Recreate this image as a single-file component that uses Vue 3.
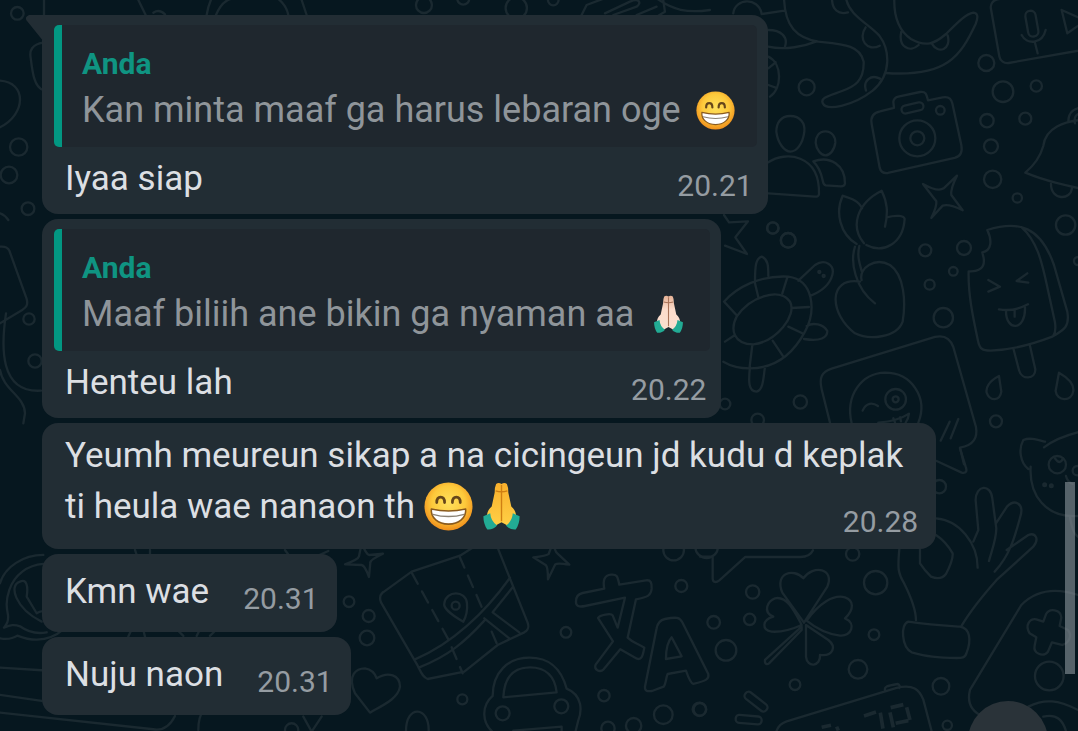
<script setup>
const messages = [
  {
    id: 1,
    quote: { author: 'Anda', text: 'Kan minta maaf ga harus lebaran oge', emoji: 'grin' },
    lines: [{ text: 'Iyaa siap', emoji: [] }],
    time: '20.21',
    tail: true,
  },
  {
    id: 2,
    quote: { author: 'Anda', text: 'Maaf biliih ane bikin ga nyaman aa', emoji: 'pray-light' },
    lines: [{ text: 'Henteu lah', emoji: [] }],
    time: '20.22',
  },
  {
    id: 3,
    lines: [
      { text: 'Yeumh meureun sikap a na cicingeun jd kudu d keplak', emoji: [] },
      { text: 'ti heula wae nanaon th', emoji: ['grin', 'pray'] },
    ],
    time: '20.28',
  },
  { id: 4, lines: [{ text: 'Kmn wae', emoji: [] }], time: '20.31' },
  { id: 5, lines: [{ text: 'Nuju naon', emoji: [] }], time: '20.31' },
]
</script>

<template>
  <main class="chat">
    <svg class="defs" aria-hidden="true">
      <defs>
        <radialGradient id="face" cx="50%" cy="42%" r="58%">
          <stop offset="0" stop-color="#ffe05c" />
          <stop offset="0.6" stop-color="#fdc93b" />
          <stop offset="1" stop-color="#f08f1c" />
        </radialGradient>
        <linearGradient id="skin" x1="0" y1="0" x2="0" y2="1">
          <stop offset="0" stop-color="#f9b02c" />
          <stop offset="1" stop-color="#ffd046" />
        </linearGradient>
        <linearGradient id="skin-light" x1="0" y1="0" x2="0" y2="1">
          <stop offset="0" stop-color="#e5b296" />
          <stop offset="0.4" stop-color="#fbdccb" />
          <stop offset="1" stop-color="#fbe0d0" />
        </linearGradient>
        <symbol id="grin" viewBox="0 0 50 50">
          <circle cx="25" cy="25" r="24.5" fill="url(#face)" />
          <path d="M13 21q0-5.500 4-5.500t4 5.500M29 21q0-5.500 4-5.500t4 5.500" fill="none" stroke="#66461a" stroke-width="2.800" stroke-linecap="round" />
          <path d="M7.500 27.500q17.500 4 35 0c.8 9-7 15.500-17.500 15.500S6.700 36.500 7.500 27.500z" fill="#fff" stroke="#8a5a1e" stroke-width="1.600" stroke-linejoin="round" />
          <path d="M9 33q16 4.500 32 0" fill="none" stroke="#8b8377" stroke-width="1.500" />
        </symbol>
        <symbol id="pray" viewBox="0 0 50 50">
          <path d="M19.500 2q2.500-2 5.500 0 3-2 5.500 0Q32 5 32 11l3 14q5 4 5 11l-8 9-7-4-7 4-8-9q0-7 5-11l3-14q0-6 1.500-9z" fill="url(#skin)" />
          <path d="M25 3v37M19 9q6 2 12 0" stroke="#cf7f13" stroke-width="1.400" fill="none" />
          <path d="M13.500 32L6.500 35q0 8 4 13.500 6 .5 10-4Q14 40 13.500 32z" fill="#22ab94" />
          <path d="M36.500 32l7 3q0 8-4 13.500-6 .5-10-4Q36 40 36.500 32z" fill="#22ab94" />
        </symbol>
        <symbol id="pray-light" viewBox="0 0 50 50">
          <path d="M19.500 2q2.500-2 5.500 0 3-2 5.500 0Q32 5 32 11l3 14q5 4 5 11l-8 9-7-4-7 4-8-9q0-7 5-11l3-14q0-6 1.500-9z" fill="url(#skin-light)" />
          <path d="M25 3v37M19 9q6 2 12 0" stroke="#a9745a" stroke-width="1.400" fill="none" />
          <path d="M13.500 32L6.500 35q0 8 4 13.500 6 .5 10-4Q14 40 13.500 32z" fill="#22ab94" />
          <path d="M36.500 32l7 3q0 8-4 13.500-6 .5-10-4Q36 40 36.500 32z" fill="#22ab94" />
        </symbol>
      </defs>
    </svg>

    <svg class="wallpaper" viewBox="0 0 1078 731" preserveAspectRatio="xMidYMid slice" aria-hidden="true">
      <!-- upper right: octopus, voice card, camera, people, bell, sparkle -->
      <g transform="translate(760 0) scale(.3333)">
        <path d="M72-5C75 80 110 115 175 125c75 8 125 10 136 60 2 60-30 75-65 88-40 15-65 20-58 36 10 25 90 10 150-37 60-50 50-125 20-165-35-38-90-60-100-112M5 42l68-10M25 140c50 12 110-2 145-16" />
        <path d="M216-5c0 35 20 50 48 42M317 82c-25 35 5 75 42 55M318 272c-10-30 15-50 42-36M25 90c38 0 60 20 50 50M25 170c42 20 42 95 5 120M25 205l22-18M25 255l22 8" />
        <path d="M403-5c-2 60 18 100 50 122 45 25 70 15 105-15 40-40 60-60 82-64 18 2 12 20 7 34-45 95-85 160-270 147M424 95c-10 45 25 65 52 40M515 130c20 35 60 18 48-24" />
        <rect x="722" y="-4" width="310" height="194" rx="24" transform="rotate(-10 740 190)" />
        <rect x="800" y="32" width="31" height="78" rx="15" transform="rotate(-10 816 70)" />
        <path d="M785 105c15 30 62 28 72-15M825 128l8 32M905 30l72 32-55 38z" />
        <path d="M335 372c-4-22 5-34 25-38l42-10-2-18c1-9 6-14 15-16l65-14c18-3 20 8 24 25l44-9c16-3 26 4 29 18l27 125c4 22-4 35-20 39l-200 45c-14 2-22-4-25-16z" />
        <circle cx="472" cy="415" r="54" /><circle cx="472" cy="415" r="21" /><circle cx="541" cy="331" r="13" />
        <rect x="424" y="312" width="67" height="24" rx="12" transform="rotate(-13 457 324)" />
        <path d="M91 348c30 0 45 22 42 47-5 40-25 60-42 60s-38-25-42-60c0-25 12-47 42-47zM196 394c20 0 31 17 30 34-3 25-18 38-30 38s-27-15-29-38c0-17 9-34 29-34zM25 487c50-35 155-25 152 95-1 8-5 8-12 8L25 580M160 484c50-17 96 10 95 67-1 7-5 8-12 8l-46-3c-6-2-8-8-9-15-5-26-13-42-28-57z" />
        <path d="M489 552q45 25 62 13l40-38q-20 40-17 58l34 46q-40-20-60-14l-34 37q17-35 15-50z" />
        <path d="M1000 358c-95 0-145 30-150 80-10 35-30 60-54 80 60 25 120 38 204 56M873 552c0 50 60 50 63 12M925 365c0-30 20-42 45-42M945 370c-5-20 5-30 25-32" />
        <circle cx="140" cy="262" r="24" /><circle cx="679" cy="189" r="24" /><circle cx="729" cy="275" r="31" /><circle cx="829" cy="258" r="17" /><circle cx="681" cy="362" r="20" /><circle cx="796" cy="356" r="18" /><circle cx="693" cy="439" r="21" /><circle cx="698" cy="538" r="26" /><circle cx="772" cy="594" r="14" /><circle cx="917" cy="675" r="29" /><circle cx="39" cy="684" r="17" /><circle cx="84" cy="721" r="22" />
      </g>
      <!-- middle right: sprout, turtle, ice cream, sticker, cat -->
      <g transform="translate(700 200) scale(.3333)">
        <path d="M470 132c-50-30-65-95-42-145 25 8 48 15 58 38M492 130C450 80 470 10 545-28c17 35 20 65 10 108M560 52c30-8 52-5 54 5-5 75-65 105-115 78M465 140c-15 45 0 125 60 170M478 138c-7 30 0 50 7 75M480 245c-100-15-90 100-15 155 40 20 125 15 143-35 10-60 5-140-38-170-45-25-95 10-85 45" />
        <path d="M72 305C110 262 180 225 265 230c75 10 85 100 50 165-40 75-95 110-165 110-35 0-60-8-80-20M110 350c40-60 130-90 160-45 22 40-40 120-110 128-60 0-70-45-50-83zM165 250l10 42M262 232l-15 48M295 242l50-47c30-20 60 0 52 30-8 30-35 50-65 62M320 378c20-12 50-5 62 15 0 20-20 32-70 24M165 245c0-50 3-70 20-75 20 8 20 30 20 58M150 500c-5 45-5 75 20 75 20-5 20-40 25-75M75 308l35 38M275 324l52-3M265 380l42 20M218 422l30 45M157 435l-8 65M75 425l30-20" />
        <circle cx="358" cy="216" r="3" /><circle cx="371" cy="228" r="3" />
        <path d="M862 90c95-30 160-10 200 105l40 140c8 45-10 55-45 75-65 25-120 40-185 42-25 0-33-5-38-30-15-70-30-140-28-208 30 2 50-10 45-40l-4-17c28-5 30-35 15-67zM965 82c45 40 60 100 75 170l25 115c3 20 0 33-5 40M865 240l35 20-35 15M982 220l-32 23 35 5M897 328q45 8 87-15M918 332c0 65 60 60 57-10M944 328v22M940 445l17 65c8 32 50 28 49-2l-17-75" />
        <path d="M390 668l-25-100c-8-35 0-52 30-62l310-95c25-6 45 3 55 30l68 240c5 30-5 55-48 62l12 50M455 670c-20-85 30-150 100-152 80 0 130 75 100 150M488 632c10-25 30-25 46-14M535 668q60-5 92-27-2 17-10 27M580 655l5 12M600 652l3 12M722 722l27-57M752 715l23-58" />
        <circle cx="587" cy="598" r="31" /><circle cx="587" cy="598" r="9" />
        <path d="M897 528c-30 15-40 35-37 50 10 28 40 25 44-3zM1077 518c35 20 45 40 43 55-5 35-50 30-53 0z" />
        <circle cx="218" cy="84" r="17" /><circle cx="265" cy="121" r="22" /><circle cx="676" cy="151" r="18" /><circle cx="792" cy="144" r="21" /><circle cx="760" cy="214" r="13" /><circle cx="689" cy="254" r="15" /><circle cx="730" cy="353" r="29" /><circle cx="1134" cy="183" r="12" /><circle cx="301" cy="606" r="20" /><circle cx="173" cy="660" r="19" /><circle cx="75" cy="612" r="16" /><circle cx="888" cy="664" r="18" />
        <path d="M72 45l15 22 57-3-38 48 35 50-66-25" />
      </g>
      <g transform="translate(900 390) scale(.3333)">
        <path d="M110 213l75 35c14 3 17-5 12-18l-17-55M385 237c-25-20-30-60-15-87 18-8 38-2 65 5M432 172q40-30 110-47M392 230c-5 85 45 155 143 148M498 258q4 18 20 24M465 205q15 22 24 0" />
        <circle cx="472" cy="224" r="26" /><circle cx="532" cy="242" r="14" /><circle cx="434" cy="284" r="4" /><circle cx="454" cy="287" r="4" /><circle cx="118" cy="290" r="20" />
      </g>
      <!-- lower right: clover, hand, gamepad, clock, speech bubble -->
      <g transform="translate(700 460) scale(.3333)">
        <path d="M0 290h38v65c0 13 10 14 20 6l78-70h165c20 0 32-7 38-20" />
        <path d="M312 488l-65-90c-25-60 35-75 63-43 30-42 95-30 72 25zM305 495c-22 10-60 22-90 20-30-5-30-35 5-45-35-15-15-48 5-55 37-8 60 42 80 80zM320 482c35-50 80-80 115-70 25 8 30 35 0 63 35 15 20 55-15 52-40-5-70-20-100-45zM318 495v95c3 35 45 30 42-5 40 5 50-25 25-45zM305 500L195 600c-2 12 6 15 12 10l98-100z" />
        <path d="M708 175c70 5 125 75 125 148M708 225q30 20 50 55 2 20-20 62-15 20-45 8-20-20-33-40v-45M598 268c-5 55-5 70 15 103 25 50 35 80 35 110M820 245l15-35-8-90c0-45 45-50 50-5l12 90c0 35-15 70-22 98M888 190l33-50c25-25 52-8 40 30-15 55-30 115-77 165M920 270l65-45c20-8 35 10 15 35L890 360c-40 45-80 95-105 137" />
        <path d="M625 485c70 10 110 12 155 15 30 5 35 40 20 78-4 16-15 16-30 16-60 0-90-5-135-17-30-15-35-85-10-92z" />
        <path d="M1134 405c-75-25-130-10-170 30L810 690c-10 40 5 65 40 80M985 740c50-25 90-20 149 10M1030 770c40-10 60 10 70 50M1110 170c5 35 15 55 24 60" />
        <path d="M1030 485l8-22c10-20 45-15 46 10l-5 25 25 12c15 20 0 42-18 45l-30-8-12 28c-15 18-45 5-40-18l5-25-20-12c-15-25 0-45 20-42z" />
        <circle cx="1048" cy="648" r="43" />
        <path d="M230 812c5-15 12-22 30-28l330-100c50-12 68 5 80 35l25 95M555 690c-2-10 3-12 38-18 6 2 7 8 5 12" />
        <path d="M492 768l36-12M541 758l8 48M572 743l38-9M570 757l10 45M620 742l10 38M587 790l38-8M365 802l28-6M410 800l5 12" stroke-width="11" stroke-linecap="butt" />
        <rect x="128" y="713" width="80" height="24" rx="11" transform="rotate(38 168 725)" /><rect x="107" y="767" width="78" height="24" rx="11" transform="rotate(5 146 779)" />
        <circle cx="158" cy="396" r="20" /><circle cx="41" cy="487" r="19" /><circle cx="149" cy="478" r="17" /><circle cx="78" cy="571" r="31" /><circle cx="527" cy="368" r="35" /><circle cx="522" cy="524" r="16" /><circle cx="474" cy="628" r="28" /><circle cx="285" cy="674" r="16" /><circle cx="723" cy="679" r="25" /><circle cx="742" cy="796" r="14" /><circle cx="458" cy="282" r="20" /><circle cx="-2" cy="748" r="20" />
      </g>
      <!-- lower middle: map, language symbols, car, heart, sparkles -->
      <g transform="translate(330 540) scale(.3333)">
        <path d="M45 73q40-14 42-24l8-40q12 32 22 36l42-4q-38 18-38 27l-4 43q-12-34-22-36zM610 52q40-4 46-10l14-38q4 30 12 36l36 34q-36-6-42-1l-22 45q0-36-6-42z" />
        <path d="M155 160l90-65 145-48 40-25M505 28l88 220c5 15 2 22-10 29l-80 38-100 80-110 22c-15-5-20-20-30-40l-110-190c-5-12-5-20 5-30M255 358c110-45 210-140 285-245M268 382c90-35 140-80 195-140M548 142l-60 75 80 60M463 235l75 60" />
        <path d="M245 98l110 200M388 48l68 155M365 322l33 78M485 275l18 42" stroke-dasharray="38 26" />
        <path d="M400 245c-45-25-60-45-57-55 5-40 65-40 68 0 2 20-3 40-11 55z" /><circle cx="377" cy="197" r="12" />
        <path d="M120 518L75 460c-25-55 5-75 30-75 20 3 30 15 35 30 35-22 70-10 70 25-5 35-50 55-90 78z" />
        <path d="M738 185c0-15 5-23 20-26l65-13c-5-25 0-40 20-42 18-2 20 5 25 30l80-13c15-2 18 8 17 25-2 20-10 25-47 32l-25 115c15 15 30 17 50 30-5 30-10 37-22 33l-50-28-50 60c-12 12-30 0-24-14l52-70-45-70c5-10 40-15 44-8l15 37 22-90-120 25c-18 4-28 0-27-13z" />
        <path d="M945 440l35-175c3-17 12-25 25-28 35-7 45-5 52 10l78 155c3 15-5 20-45 30-8-2-15-20-22-40l-55 10c-5 10-5 30-12 38l-35 13c-15 2-22 0-21-13zM1025 292l30 57-47 8c0-30 3-50 17-65z" />
        <path d="M488 468c0-70 45-115 110-115 60 0 95 30 112 93 50 20 45 70 35 95l-8 32M488 468c-35 30-32 80 0 108M520 472c3-60 30-90 80-90s75 30 80 75zM550 572l145-12v15M228 573c0-80 70-75 68 0" />
        <circle cx="518" cy="520" r="21" /><circle cx="694" cy="499" r="21" />
        <circle cx="57" cy="185" r="16" /><circle cx="116" cy="228" r="18" /><circle cx="111" cy="294" r="22" /><circle cx="397" cy="478" r="15" /><circle cx="708" cy="277" r="16" /><circle cx="822" cy="467" r="17" /><circle cx="1054" cy="138" r="18" /><circle cx="1000" cy="524" r="28" /><circle cx="1110" cy="508" r="19" /><circle cx="834" cy="565" r="20" /><circle cx="911" cy="557" r="23" /><circle cx="1031" cy="30" r="31" /><circle cx="1130" cy="20" r="34" />
      </g>
      <!-- left edge and top strip -->
      <g transform="scale(.3333)">
        <circle cx="52" cy="40" r="19" /><circle cx="56" cy="441" r="26" /><circle cx="27" cy="525" r="25" /><circle cx="84" cy="626" r="19" /><circle cx="87" cy="957" r="17" /><circle cx="105" cy="1083" r="20" />
        <path d="M132 0v45M130 128c-35 5-42 25-38 45 5 40 10 90 38 97M0 242c80 5 80 100 0 140M0 640q15 5 25 20M415 0l22 45M460 38q18-12 35 5M620 45q5-30 15-50M648 45c25-60 60-50 90-55M905 0l15 45M800-20c40 10 60 40 65 65" />
        <path d="M0 740c20-2 25 5 28 12l52 145c5 18-2 25-12 32L0 970M18 940c-15 100-20 240 105 232M0 1110c10 60 75 80 75 130l-5 30" />
        <circle cx="1272" cy="15" r="24" /><circle cx="1549" cy="24" r="32" /><circle cx="1390" cy="-4" r="18" /><circle cx="1660" cy="0" r="16" />
        <path d="M1745 45l15-30 80-30M1815 40l75-35c30-12 35 5 20 15l-70 25M1910 45l60-25M1990 0l5 35-20 12M2130 30c-70 10-110 0-160-35M2200 40c5-45 75-50 85 0" />
        <path d="M0 1750c15-50 70-85 130-85M28 1770c15-45 55-75 102-78M28 1770c-12 35-8 55-4 75 2 20-4 28-12 38 20-8 30-10 48-4 22 16 50 24 80 18M0 1915c20 4 40 0 52-8 50 20 100 15 140-20M60 1745c20-10 25 15 20 45l30 50c15-10 20-5 25 0M60 1745c-35 10-15 80 65 120" />
        <path d="M0 2003l125 8M0 2085l125 18M0 2138l460 50c30 5 50-10 65-40M405 1650l5 15M450 1650v15M855 1650l15 20M985 1653l-40 18M385 1910l10-22M430 1890l5 20M530 1888l20 20M590 1908l10-20M650 1888l-20 20M595 2190c0-30 5-45 15-60M910 2150l25 45 30-45" />
        <circle cx="875" cy="2190" r="20" />
      </g>
    </svg>

    <section class="messages" aria-label="Pesan">
      <article
        v-for="m in messages"
        :key="m.id"
        class="bubble"
        :class="{ quoted: m.quote, long: m.lines.length > 1, first: m.tail }"
      >
        <svg v-if="m.tail" class="tail" viewBox="0 0 20 30" aria-hidden="true">
          <path d="M20 0H3Q-2 2 1 6L18 27V30H20z" fill="#222d34" />
        </svg>
        <blockquote v-if="m.quote" class="quote">
          <strong class="author">{{ m.quote.author }}</strong>
          <p class="quote-text">
            <span>{{ m.quote.text }}</span>
            <svg class="emoji small" aria-hidden="true"><use :href="'#' + m.quote.emoji" /></svg>
          </p>
        </blockquote>
        <div class="body">
          <p class="text">
            <span v-for="(line, i) in m.lines" :key="i" class="line">
              <span>{{ line.text }}</span>
              <span v-if="line.emoji.length" class="emoji-run">
                <svg v-for="e in line.emoji" :key="e" class="emoji" aria-hidden="true"><use :href="'#' + e" /></svg>
              </span>
            </span>
          </p>
          <time class="time">{{ m.time }}</time>
        </div>
      </article>
    </section>

    <div class="scroll-thumb"></div>
    <button class="jump" type="button" aria-label="Ke pesan terbaru"></button>
  </main>
</template>

<style>
html,
body {
  background: #06171f;
}
</style>

<style scoped>
.chat {
  position: relative;
  min-height: 100vh;
  box-sizing: border-box;
  padding: 15px 16px 15px 42px;
  overflow: hidden;
  background: #06171f;
  font-family: Roboto, "Noto Sans", sans-serif;
}
.defs {
  position: absolute;
  width: 0;
  height: 0;
}
.wallpaper {
  position: absolute;
  inset: 0;
  width: 100%;
  height: 100%;
  fill: none;
  stroke: #1a2930;
  stroke-width: 7;
  stroke-linecap: round;
  stroke-linejoin: round;
}
.messages {
  position: relative;
  display: flex;
  flex-direction: column;
  align-items: flex-start;
  gap: 5px;
}
.bubble {
  position: relative;
  box-sizing: border-box;
  max-width: 100%;
  border-radius: 16px;
  background: #222d34;
  padding: 12px 18px 15px 23px;
  color: #dcdfe3;
}
.bubble.quoted {
  padding: 10px 11px 10px 12px;
}
.bubble.long {
  padding: 7px 18px 9px 23px;
}
.bubble.first {
  border-top-left-radius: 0;
}
.tail {
  position: absolute;
  left: -16px;
  top: 0;
  width: 20px;
  height: 30px;
}
.quote {
  margin: 0;
  padding: 17px 22px 13px 20px;
  border-left: 8px solid #029782;
  border-radius: 5px;
  background: #1f272e;
}
.author {
  display: block;
  font-size: 30px;
  line-height: 44px;
  font-weight: 700;
  color: #0f9482;
}
.quote-text {
  display: flex;
  align-items: center;
  gap: 15px;
  margin: 0;
  font-size: 36px;
  line-height: 48px;
  color: #8f959a;
}
.body {
  display: flex;
  align-items: flex-end;
  justify-content: space-between;
  gap: 34px;
}
.quoted .body {
  padding: 6px 4px 0 11px;
}
.long .body {
  display: grid;
}
.text {
  margin: 0;
  font-size: 35px;
  line-height: 51px;
}
.long .text {
  grid-area: 1 / 1;
  padding: 0 15px 8px 0;
}
.line {
  display: flex;
  align-items: center;
  gap: 9px;
}
.emoji-run {
  display: flex;
  gap: 4px;
}
.time {
  font-size: 30px;
  line-height: 36px;
  color: #959ca2;
}
.long .time {
  grid-area: 1 / 1;
  align-self: end;
  justify-self: end;
}
.emoji {
  flex: none;
  width: 49px;
  height: 49px;
}
.emoji.small {
  width: 39px;
  height: 39px;
}
.scroll-thumb {
  position: absolute;
  right: 3px;
  top: 66%;
  width: 10px;
  height: 192px;
  background: rgba(140, 150, 157, 0.6);
}
.jump {
  position: absolute;
  right: 30px;
  bottom: -50px;
  width: 80px;
  height: 80px;
  padding: 0;
  border: 0;
  border-radius: 50%;
  background: #2a3339;
}
</style>
